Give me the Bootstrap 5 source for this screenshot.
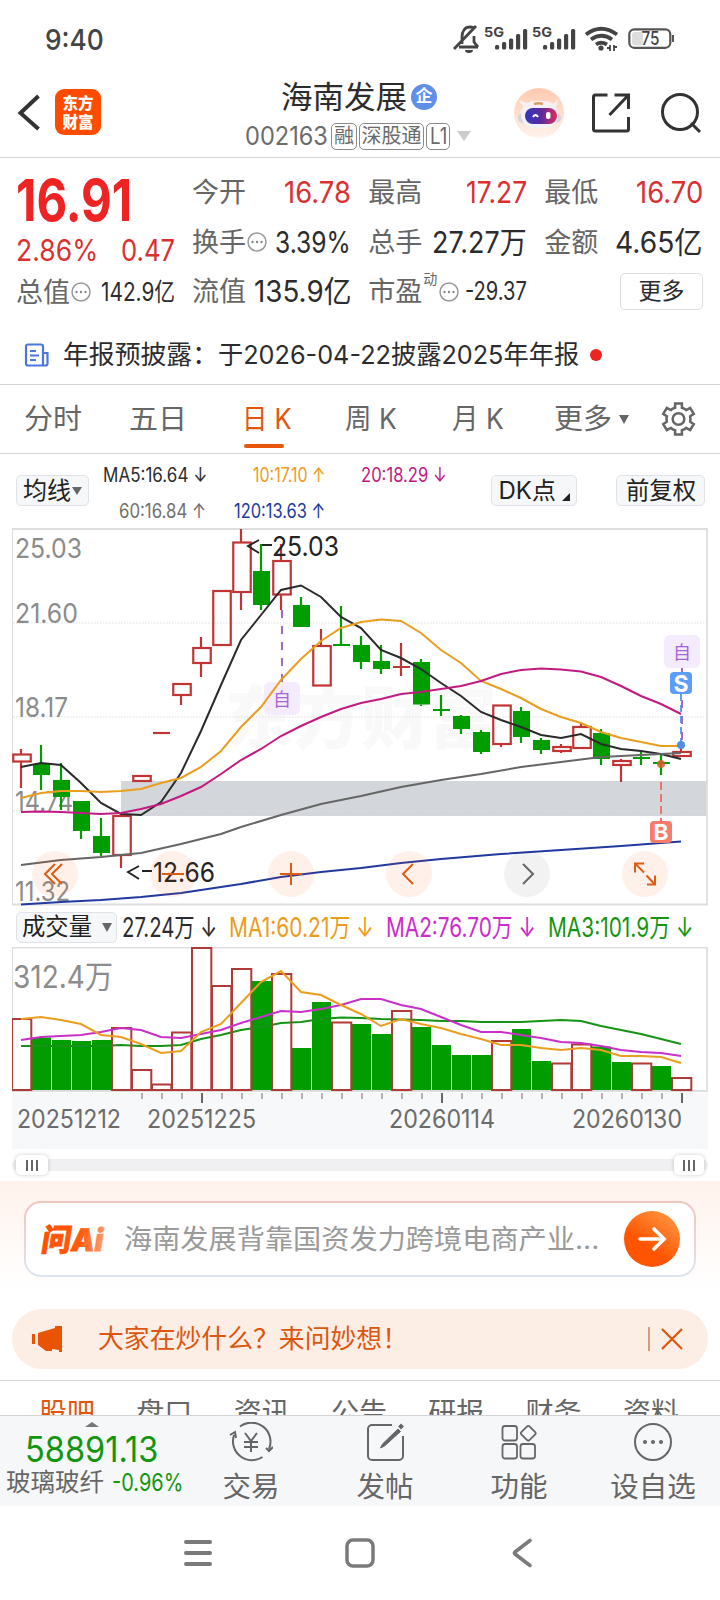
<!DOCTYPE html>
<html lang="zh-CN">
<head>
<meta charset="utf-8">
<meta name="viewport" content="width=device-width, initial-scale=1">
<title>海南发展 002163</title>
<link rel="stylesheet" href="https://cdn.jsdelivr.net/npm/bootstrap@5.3.0/dist/css/bootstrap.min.css">
<style>
  body{width:720px;height:1600px;overflow:hidden;background:#fff;color:#2c2c2e;font-family:Inter,"Noto Sans CJK SC",sans-serif;line-height:1}
  svg{display:block;flex:none}
  svg text{font-family:Inter,"Noto Sans CJK SC",sans-serif}
  .fit{display:inline-block;white-space:nowrap;flex:none}
  .fit>span{display:inline-block;transform-origin:0 50%}
  .statusbar{height:78px;padding:0 46px 0 45px;color:#444}
  .s29{font-size:29px}
  .topbar{height:80px;border-bottom:1px solid #d4d4d4}
  .applogo{width:46px;height:46px;border-radius:9px;background:#ff4b00;color:#fff;font:900 15.5px/19px "Noto Sans CJK SC",sans-serif;padding-top:4px;margin-left:15px}
  .tagbox{border:1.5px solid #8a8a8a;border-radius:5px;height:27px;color:#6b6b6b;font-size:20px}
  .ent{width:26px;height:26px;border-radius:50%;background:#5f8fe8;color:#fff;font-size:17px;font-weight:700}
  .code{color:#6b6b6b;font-size:25px}
  .quote{height:159px;padding:10px 17px 0 16px}
  .bigprice{font-size:58px;font-weight:700;color:#ee2324}
  .up{color:#d9312f}
  .lab{font-size:27px;color:#666}
  .ell{margin-left:1px}
  .val{font-size:29.5px}
  .qrow{height:49.5px}
  .sval{font-size:25px}
  .morebtn{width:83px;height:37px;border:1.5px solid #dcdee0;border-radius:5px;font-size:23px}
  .notice{height:68px;padding:9px 0 0 24px;border-bottom:1px solid #d4d4d4;font-size:26px}
  .tabsbar{height:69px;border-bottom:1px solid #d4d4d4;color:#666;font-size:28.5px;padding-left:24px}
  .tabon{color:#e2570c;position:relative}
  .tabon::after{content:"";position:absolute;left:2px;top:39px;width:40px;height:4px;border-radius:2px;background:#e8560a}
  .indic{height:74px;padding:0 15px 0 16px}
  .pill{background:#f6f7f9;border:1.5px solid #dfe2e6;border-radius:5px;height:31px;font-size:24px;color:#222}
  .malist{width:344px;font-size:19.5px;line-height:36px;margin:3px 0 0 14px}
  .volhead{height:41px;padding:1px 16px 0;font-size:26.5px}
  .rail{height:12px;border-radius:6px;background:#f0f0f3;margin:10px 12px 10px;position:relative}
  .grip{position:absolute;top:-4px;height:20px;border-radius:5px;background:#fff;box-shadow:0 0 4px rgba(0,0,0,.2)}
  .grip i{width:1.5px;height:11px;background:#666}
  .aizone{height:128px;padding:20px 24px 0;background:linear-gradient(#fff2ec,#fff 108px)}
  .askbox{height:76px;border-radius:17px;border:2px solid transparent;background:linear-gradient(#fff,#fff) padding-box,linear-gradient(#f0c6be,#dfe5f2) border-box;padding:0 14px 0 11px}
  .sendbtn{width:56px;height:56px;border-radius:50%;background:linear-gradient(215deg,#ff9440 10%,#ff5500 62%)}
  .hint{color:#9a9a9a;font-size:27px}
  .promo{height:60px;border-radius:30px;background:#fceee5;margin:0 12px;color:#dd560e;font-size:26px;padding:0 24px 0 20px}
  .subtabs{height:35px;margin-top:11px;border-top:1px solid #d4d4d4;overflow:hidden;padding:18px 0 0 39px;gap:41.3px;color:#666;font-size:28px}
  .dock{height:91px;background:#f6f7f9;border-top:1px solid #d4d4d6;color:#666}
  .dock .idx{width:184px}
  .dock .cell{width:134px;font-size:28.5px;padding-top:6px}
  .dock .cell span{margin-top:11px}
  .green{color:#12960f}
</style>
</head>
<body>

<div class="statusbar d-flex align-items-center justify-content-between">
  <span class="fit s29 fw-medium" data-w="59">9:40</span>
  <svg width="222" height="30" viewBox="452 24 222 30" fill="#444">
    <g fill="none" stroke="#444" stroke-width="2.8"><path d="M459 47h19M462 44v-7c0-6 3-10 8-10 2 0 4 .6 5 2M474 36v6l4 5M454 49l22-23"/></g><path d="M465 50h8a4 3 0 0 1-8 0z"/>
    <text x="484" y="37" font-size="13.5" font-weight="700" textLength="20" lengthAdjust="spacingAndGlyphs">5G</text>
    <g id="sig"><rect x="495" y="45" width="4.2" height="4.5" rx="1.5"/><rect x="502" y="42" width="4.2" height="7.5" rx="1.5"/><rect x="509" y="38.500" width="4.200" height="11" rx="1.5"/><rect x="516" y="34" width="4.2" height="15.5" rx="1.5"/><rect x="523" y="29" width="4.2" height="20.500" rx="1.500"/></g>
    <text x="532" y="37" font-size="13.5" font-weight="700" textLength="20" lengthAdjust="spacingAndGlyphs">5G</text>
    <use href="#sig" x="48"/>
    <g fill="none" stroke="#444" stroke-width="3.8"><path d="M586 34.500q15-11.500 31 0M591 39.500q10.500-7.500 21 0M596 44.500q5-3.500 11 0"/></g><circle cx="601" cy="48" r="2.600"/><path d="M610 45v6M614 45v6M607 48h3M614 47h3" stroke="#444" stroke-width="1.800"/>
    <rect x="632" y="32" width="11" height="13.500" rx="3" fill="#ddd"/><rect x="629.300" y="29.300" width="41" height="18.500" rx="5" fill="none" stroke="#555" stroke-width="2.200"/><rect x="672.500" y="35.500" width="1" height="6" stroke="#555"/>
    <text x="641.500" y="45" font-size="18" font-weight="500" textLength="18" lengthAdjust="spacingAndGlyphs">75</text>
  </svg>
</div>

<div class="topbar d-flex">
  <div class="d-flex align-items-center ps-3" style="padding-bottom:12px">
    <svg width="24" height="38" viewBox="0 0 24 38" fill="none" stroke="#333" stroke-width="4"><path d="M22.500 3 4.500 20l18 16"/></svg>
    <div class="applogo text-center">东方<br>财富</div>
  </div>
  <div class="d-flex flex-column align-items-start" style="margin-left:144px">
    <div class="d-flex align-items-center ps-1" style="height:37px;margin-left:32px">
      <span class="fit" data-w="126" style="font-size:31px">海南发展</span><span class="ent d-flex align-items-center justify-content-center ms-1">企</span>
    </div>
    <div class="d-flex align-items-center" style="height:42px">
      <span class="fit code" data-w="83">002163</span>
      <span class="tagbox d-flex align-items-center justify-content-center" style="width:26px;margin-left:3px">融</span>
      <span class="tagbox d-flex align-items-center justify-content-center" style="width:65px;margin-left:2px">深股通</span>
      <span class="tagbox d-flex align-items-center justify-content-center" style="width:24px;margin-left:2px"><span class="fit" data-w="17" style="font-size:23px">L1</span></span>
      <svg style="margin-left:7px" width="14" height="10" viewBox="0 0 14 10"><path d="M0 0h14L7 10z" fill="#ccc"/></svg>
    </div>
  </div>
  <div class="d-flex align-items-center ms-auto" style="padding:0 18px 9px 0">
    <svg width="50" height="50" viewBox="0 0 50 50">
      <defs><linearGradient id="bot" x1="0" y1="0" x2="0" y2="1"><stop offset="0" stop-color="#ffc9ae"/><stop offset="1" stop-color="#fff3ee"/></linearGradient><linearGradient id="visor"><stop offset="0" stop-color="#3337b8"/><stop offset=".5" stop-color="#5a2a9c"/><stop offset="1" stop-color="#e0305e"/></linearGradient></defs>
      <circle cx="25" cy="25" r="25" fill="url(#bot)"/><path d="M5 11q2 8 8 8l4-4q-8 0-12-4zM43 10q-1 6-7 6l4 4q5-3 3-10z" fill="#f5f0f2"/>
      <circle cx="9" cy="30" r="5" fill="#d5d3dc"/><circle cx="42" cy="30" r="5" fill="#d5d3dc"/>
      <rect x="7" y="13" width="37" height="27" rx="13" fill="#f3f1f5"/><path d="M20 16q5-1.500 9 0" stroke="#d99b66" stroke-width="2.600" fill="none"/>
      <rect x="11" y="20" width="32" height="16" rx="8" fill="url(#visor)"/><path d="M19 29q2.500-4 5 0" stroke="#fff" stroke-width="2" fill="none"/><rect x="32" y="24" width="4.500" height="7" rx="2" fill="#fff"/>
    </svg>
    <svg style="margin-left:27px" width="40" height="40" viewBox="0 0 39 40" fill="none" stroke="#333" stroke-width="3"><path d="M16 2H4a2 2 0 0 0-2 2v32a2 2 0 0 0 2 2h31a2 2 0 0 0 2-2V24M23 2h14v14M36.500 2.500 18 22"/></svg>
    <svg style="margin-left:29px" width="42" height="42" viewBox="0 0 42 42" fill="none" stroke="#333" stroke-width="3"><circle cx="20" cy="20" r="17.500"/><path d="m31 31 9 9"/></svg>
  </div>
</div>

<div class="quote d-flex" style="gap:17.400px">
  <div style="width:159px">
    <div class="d-flex align-items-center" style="height:64px"><span class="fit bigprice" data-w="116">16.91</span></div>
    <div class="d-flex justify-content-between align-items-center up val" style="height:37px"><span class="fit" data-w="82">2.86%</span><span class="fit" data-w="54">0.47</span></div>
    <div class="d-flex align-items-center" style="height:46px"><span class="lab">总值</span><svg width="20" height="20" viewBox="0 0 20 20" class="ell"><use href="#dots"/></svg><span class="fit sval ms-auto" data-w="74">142.9亿</span></div>
  </div>
  <div style="width:159px">
    <div class="d-flex align-items-center justify-content-between qrow"><span class="lab">今开</span><span class="fit val up" data-w="67">16.78</span></div>
    <div class="d-flex align-items-center qrow"><span class="lab">换手</span><svg width="20" height="20" viewBox="0 0 20 20" class="ell"><use href="#dots"/></svg><span class="fit val ms-auto" data-w="76">3.39%</span></div>
    <div class="d-flex align-items-center justify-content-between qrow"><span class="lab">流值</span><span class="fit val" data-w="97">135.9亿</span></div>
  </div>
  <div style="width:159px">
    <div class="d-flex align-items-center justify-content-between qrow"><span class="lab">最高</span><span class="fit val up" data-w="61">17.27</span></div>
    <div class="d-flex align-items-center justify-content-between qrow"><span class="lab">总手</span><span class="fit val" data-w="95">27.27万</span></div>
    <div class="d-flex align-items-center qrow"><span class="lab">市盈</span><span class="lab align-self-start" style="font-size:14px;margin:5px 1px 0">动</span><svg width="20" height="20" viewBox="0 0 20 20" class="ell"><use href="#dots"/></svg><span class="fit sval ms-auto" data-w="62">-29.37</span></div>
  </div>
  <div style="width:159px">
    <div class="d-flex align-items-center justify-content-between qrow"><span class="lab">最低</span><span class="fit val up" data-w="67">16.70</span></div>
    <div class="d-flex align-items-center justify-content-between qrow"><span class="lab">金额</span><span class="fit val" data-w="88">4.65亿</span></div>
    <div class="d-flex align-items-center justify-content-end qrow"><span class="morebtn d-flex align-items-center justify-content-center">更多</span></div>
  </div>
</div>
<svg width="0" height="0" class="position-absolute"><defs><g id="dots"><circle cx="10" cy="10" r="9" fill="none" stroke="#9a9a9a" stroke-width="1.500"/><circle cx="5.500" cy="10" r="1.200" fill="#888"/><circle cx="10" cy="10" r="1.200" fill="#888"/><circle cx="14.500" cy="10" r="1.200" fill="#888"/></g></defs></svg>

<div class="notice d-flex align-items-center">
  <svg width="25" height="24" viewBox="0 0 25 24" fill="none" stroke="#4b76dc" stroke-width="2.200"><path d="M19 22.500V3.500a2 2 0 0 0-2-2H4a2 2 0 0 0-2 2v17a2 2 0 0 0 2 2h17.500a2 2 0 0 0 2-2V10H19M6 8h6M6 12.500h9M6 17h6"/></svg>
  <span class="fit" data-w="155" style="margin-left:14px">年报预披露：</span><span class="fit" data-w="361">于2026-04-22披露2025年年报</span>
  <svg style="margin-left:11px" width="12" height="12"><circle cx="6" cy="6" r="6" fill="#ee2324"/></svg>
</div>

<div class="tabsbar d-flex align-items-center">
  <span class="fit" data-w="58">分时</span>
  <span class="fit" data-w="58" style="margin-left:47px">五日</span>
  <span class="tabon" style="margin-left:55px"><span class="fit" data-w="50">日 K</span></span>
  <span class="fit" data-w="52" style="margin-left:53px">周 K</span>
  <span class="fit" data-w="52" style="margin-left:55px">月 K</span>
  <span class="fit" data-w="58" style="margin-left:50px">更多</span>
  <svg style="margin-left:7px" width="10" height="9"><path d="M0 0h10L5 9z" fill="#666"/></svg>
  <svg style="margin-left:32px" width="35" height="36" viewBox="0 0 36 36" fill="none" stroke="#666" stroke-width="2.600"><path d="M14.500 2h7v4.500q2.500.8 4.300 2.300L30 6.700l3.700 6-3.700 2.500q.6 2.800 0 5.600l3.700 2.500-3.700 6-4.200-2.100q-1.800 1.500-4.300 2.300V34h-7v-4.500q-2.500-.8-4.300-2.300L6 29.300l-3.700-6L6 20.800q-.6-2.800 0-5.600l-3.700-2.500 3.700-6 4.200 2.100q1.800-1.500 4.300-2.300z"/><circle cx="18" cy="18" r="6"/></svg>
</div>

<div class="indic d-flex align-items-start">
  <span class="pill d-flex align-items-center justify-content-center" style="width:73px;margin-top:21px">均线<svg style="margin-left:1px" width="10" height="8"><path d="M0 0h10L5 8z" fill="#666"/></svg></span>
  <div class="malist d-flex flex-wrap">
    <div class="text-end" style="width:103px"><span class="fit" data-w="104">MA5:16.64 ↓</span></div>
    <div class="text-end" style="width:119px;color:#eb9c1b"><span class="fit" data-w="72">10:17.10 ↑</span></div>
    <div class="text-end" style="width:122px;color:#c0177c"><span class="fit" data-w="86">20:18.29 ↓</span></div>
    <div class="text-end" style="width:103px;color:#707070"><span class="fit" data-w="87">60:16.84 ↑</span></div>
    <div class="text-end" style="width:119px;color:#20399f"><span class="fit" data-w="91">120:13.63 ↑</span></div>
  </div>
  <span class="pill d-flex align-items-center justify-content-center" style="width:86px;margin:21px 0 0 44px"><span class="fit" data-w="57">DK点</span><svg class="align-self-end mb-1" style="margin-left:6px" width="8" height="8"><path d="M8 0v8H0z" fill="#222"/></svg></span>
  <span class="pill d-flex align-items-center justify-content-center ms-auto" style="width:89px;margin-top:21px"><span class="fit" data-w="70">前复权</span></span>
</div>

<svg id="kline" class="mx-auto" width="696" height="378" viewBox="12 528 696 378"></svg>

<div class="volhead d-flex align-items-center">
  <span class="pill d-flex align-items-center justify-content-center" style="width:101px"><span class="fit" data-w="70">成交量</span><svg style="margin-left:10px" width="10" height="9"><path d="M0 0h10L5 9z" fill="#666"/></svg></span>
  <span class="fit" data-w="95" style="margin-left:5px">27.24万 ↓</span>
  <span class="fit" data-w="145" style="margin-left:12px;color:#eb9c1b">MA1:60.21万 ↓</span>
  <span class="fit" data-w="150" style="margin-left:12px;color:#cc2ccc">MA2:76.70万 ↓</span>
  <span class="fit green" data-w="145" style="margin-left:12px">MA3:101.9万 ↓</span>
</div>

<svg id="vol" class="mx-auto" width="696" height="202" viewBox="12 947 696 202"></svg>

<div class="rail">
  <div class="grip d-flex align-items-center justify-content-center" style="left:4px;width:32px;gap:3.500px"><i></i><i></i><i></i></div>
  <div class="grip d-flex align-items-center justify-content-center" style="right:4px;width:30px;gap:3.500px"><i></i><i></i><i></i></div>
</div>

<div class="aizone">
  <div class="askbox d-flex align-items-center">
    <svg width="70" height="38" viewBox="36 1220 70 38"><defs><linearGradient id="ai"><stop offset="0" stop-color="#ff5000"/><stop offset=".6" stop-color="#ff5a0a"/><stop offset="1" stop-color="#ff9a6c"/></linearGradient></defs>
      <g transform="translate(0 1252) skewX(-9)"><text x="39" y="-1" font-size="31" font-weight="900" fill="url(#ai)" stroke="url(#ai)" stroke-width=".8" textLength="62" lengthAdjust="spacingAndGlyphs">问Ai</text></g></svg>
    <span class="fit hint" data-w="475" style="margin-left:17px">海南发展背靠国资发力跨境电商产业...</span>
    <span class="sendbtn d-flex align-items-center justify-content-center ms-auto"><svg width="30" height="26" viewBox="0 0 30 26" fill="none" stroke="#fff" stroke-width="3.600" stroke-linecap="round"><path d="M3 13h23M17 3l10 10-10 10"/></svg></span>
  </div>
</div>

<div class="promo d-flex align-items-center">
  <svg width="30" height="28" viewBox="0 0 30 28" fill="#e85404"><path d="M0 9h3v10H0zM6 8l17-5V1h7v26h-3v-2l-7-1v2h-6l-4-3-4-3z"/></svg>
  <span class="fit" data-w="310" style="margin-left:36px">大家在炒什么？来问妙想！</span>
  <svg class="ms-auto" width="36" height="26" viewBox="0 0 36 26" fill="none" stroke="#dd560e"><path d="M1 1v24" stroke-width="1.200" stroke="#b8652f"/><path d="m14 3 20 20M34 3 14 23" stroke-width="2.200"/></svg>
</div>

<div class="subtabs d-flex align-items-start">
  <span style="color:#e2570c">股吧</span><span>盘口</span><span>资讯</span><span>公告</span><span>研报</span><span>财务</span><span>资料</span>
</div>

<div class="dock d-flex">
  <div class="idx position-relative">
    <svg class="position-absolute" style="left:85px;top:6px" width="14" height="5"><path d="M0 5h14L7 0z" fill="#777"/></svg>
    <div class="green" style="font-size:35px;padding:16px 0 0 25px"><span class="fit" data-w="133">58891.13</span></div>
    <div class="d-flex align-items-center" style="font-size:24.500px;height:30px;padding:0 1px 0 6px"><span>玻璃玻纤</span><span class="fit green ms-auto" data-w="71">-0.96%</span></div>
  </div>
  <div class="cell d-flex flex-column align-items-center">
    <svg width="44" height="40" viewBox="0 0 44 40" fill="none" stroke="#666" stroke-width="2"><path d="M11 4.500A19 19 0 0 1 40 27M37 26l3 3 4-4M33.500 35A19 19 0 0 1 5 13M1 13l5-3 1 6"/><path d="m16 11 6 8 6-8M22 19v11M15 20h14M15 25h14"/></svg>
    <span>交易</span>
  </div>
  <div class="cell d-flex flex-column align-items-center">
    <svg width="40" height="40" viewBox="0 0 40 40" fill="none" stroke="#666" stroke-width="2"><path d="M27 3H7a4 4 0 0 0-4 4v27a4 4 0 0 0 4 4h27a4 4 0 0 0 4-4V14"/><path d="m15.500 26 2-4L33 7l2.500 2.500L19.500 24z" fill="#666" stroke-width="1"/><path d="m34.500 6 3-3" stroke-width="4"/></svg>
    <span>发帖</span>
  </div>
  <div class="cell d-flex flex-column align-items-center">
    <svg width="36" height="40" viewBox="0 0 36 40" fill="none" stroke="#666" stroke-width="1.800"><rect x="1.500" y="4" width="14.500" height="14.500" rx="2.500"/><rect x="1.500" y="22" width="14.500" height="14.500" rx="2.500"/><rect x="19.500" y="22" width="14.500" height="14.500" rx="2.500"/><rect x="21.500" y="5.500" width="11.500" height="11.500" rx="2" transform="rotate(45 27.250 11.300)"/></svg>
    <span>功能</span>
  </div>
  <div class="cell d-flex flex-column align-items-center">
    <svg width="40" height="40" viewBox="0 0 40 40"><circle cx="20" cy="20" r="18" fill="none" stroke="#666" stroke-width="2"/><g fill="#666"><circle cx="12" cy="20" r="2"/><circle cx="20" cy="20" r="2"/><circle cx="28" cy="20" r="2"/></g></svg>
    <span>设自选</span>
  </div>
</div>

<div class="d-flex align-items-center" style="height:93px;gap:134px;padding-left:184px">
  <svg width="28" height="30" viewBox="0 0 28 30" stroke="#7a7a7a" stroke-width="4" stroke-linecap="round"><path d="M2 4h24M2 15h24M2 26h24"/></svg>
  <svg style="margin-left:-1px" width="30" height="30" viewBox="0 0 30 30" fill="none" stroke="#7a7a7a" stroke-width="3.500"><rect x="2" y="2" width="26" height="26" rx="6"/></svg>
  <svg style="margin-left:2px" width="22" height="30" viewBox="0 0 22 30" fill="none" stroke="#7a7a7a" stroke-width="3.600" stroke-linecap="round" stroke-linejoin="round"><path d="M19 2.500 4 14q-1 1 0 2l15 11.500"/></svg>
</div>

<script src="https://cdn.jsdelivr.net/npm/bootstrap@5.3.0/dist/js/bootstrap.bundle.min.js"></script>
<script>
  document.querySelectorAll('.fit').forEach(function (el) {
    var inner = document.createElement('span');
    inner.textContent = el.textContent;
    el.textContent = '';
    el.appendChild(inner);
    var w = +el.dataset.w;
    inner.style.transform = 'scaleX(' + w / inner.offsetWidth + ')';
    el.style.width = w + 'px';
  });

  var X = function (i) { return 21 + 20 * i; };
  var line = function (ys, color, w) {
    return '<polyline fill="none" stroke="' + color + '" stroke-width="' + (w || 2) + '" points="' +
      ys.map(function (y, i) { return X(i) + ',' + y; }).join(' ') + '"/>';
  };
  var pts = function (p, color) { return '<polyline fill="none" stroke="' + color + '" stroke-width="2" points="' + p + '"/>'; };
  var label = function (x, y, w, s, size, color, extra) {
    return '<text x="' + x + '" y="' + y + '" font-size="' + size + '" fill="' + color + '" textLength="' + w +
      '" lengthAdjust="spacingAndGlyphs" ' + (extra || '') + '>' + s + '</text>';
  };
  var R = '#c03534', G = '#009c00';

  // [up?, bodyTop, bodyBottom, wickTop, wickBottom]
  var k = [[1,754.5,761.5,749,788],[0,764,775,745,790],[0,780,797,763,810],[0,801,831,801,839],[0,836,853,818,856],[1,816,855,816,868],
    [1,776,781,776,781],[1,733,733,733,733],[1,684,695,684,705],[1,648,663,637,677],[1,591,645,591,645],[1,542.5,592,529,610],
    [0,571,605,544,610],[1,561,594.5,544,610],[0,605,627,597,627],[1,646,685.5,629,685],[0,645,645,606,646],[0,645,662,636,669],
    [0,661,669,645,674],[1,667,667,643,676],[0,662,704.5,659,706],[0,710,710,695,716],[0,716,729,715,734],[0,732,752,730,754],
    [1,705.500,744,705,747],[0,711,737,707,743],[0,740,750,738,754],[1,747,751,744,753],[1,727,748,723,749],[0,733,759,729,765],
    [1,761,765,759,782],[0,758,758,752,765],[0,763,763,753,775],[1,752,756,747,757]];
  var s = '<g font-weight="900" opacity=".02">' + label(225, 743, 272, '东方财富', 68, '#000') + '</g>';
  s += '<rect x="121" y="781" width="586" height="35" fill="#d3d6db"/>';
  [623, 717, 811].forEach(function (y) { s += '<path d="M13 ' + y + 'H707" stroke="#ddd" stroke-width="1.2" stroke-dasharray="1.5 1.5"/>'; });
  s += '<path d="M12.500 905V529" stroke="#ddd"/><path d="M12 529H707V904.500H12" fill="none" stroke="#dedede" stroke-width="1.800"/>';
  s += label(15,558,67,'25.03',27.5,'#8c8c8c') + label(15,623,63,'21.60',27.5,'#8c8c8c') + label(15,717,53,'18.17',27.5,'#8c8c8c') +
       label(15,811,58,'14.74',27.5,'#8c8c8c') + label(15,901,55,'11.32',27.5,'#8c8c8c');
  k.forEach(function (c, i) {
    var x = X(i), col = c[0] ? R : G;
    if (c[1] === c[2]) {
      s += '<path d="M' + (x - 8) + ' ' + c[1] + 'h17M' + x + ' ' + c[3] + 'V' + c[4] + '" stroke="' + col + '" stroke-width="2.200"/>';
    } else {
      s += '<path d="M' + x + ' ' + c[3] + 'V' + c[1] + 'M' + x + ' ' + c[2] + 'V' + c[4] + '" stroke="' + col + '" stroke-width="2.200"/>';
      s += c[0] ? '<rect x="' + (x - 7.75) + '" y="' + c[1] + '" width="17.500" height="' + (c[2] - c[1]) + '" fill="none" stroke="' + col + '" stroke-width="2.200"/>'
                : '<rect x="' + (x - 8) + '" y="' + c[1] + '" width="17" height="' + (c[2] - c[1]) + '" fill="' + col + '"/>';
    }
  });
  s += '<path d="M282 610V682M682 668V745" stroke="#9d6cc0" stroke-width="2" stroke-dasharray="8 8"/>' +
       '<path d="M681 694V745" stroke="#4e93ef" stroke-width="1.800" stroke-dasharray="7 4"/>' +
       '<path d="M661 782V822" stroke="#ee7466" stroke-width="2" stroke-dasharray="8 4"/>';
  s += '<g fill="#f4ebfd"><rect x="264" y="682" width="36" height="33" rx="6"/><rect x="664" y="635" width="36" height="33" rx="6"/></g>';
  s += label(273,706,18,'自',18,'#a266d6') + label(673,659,18,'自',18,'#a266d6');
  s += line([767,763,765,783,803,814,815,802,773,731,685,640,615,590,585.5,597,617,628,650,658,669,683,696,712,720,727,735,738,734,744,749,751,754,759], '#2a2a2a');
  s += line([798,793,791,791,792,791,789,783,778,767,751,727,707,680,659,641,628,622,619.5,621,633,650,663,681,689,698,709,717,723,732,738,742,746,746], '#e99e1f');
  s += line([812,811.5,812,813,814,813,809,804,796,787,774,760,749,736,726,717,709,703,699,694,692,689,686,681,674,670,668.5,669.5,671.5,677,686,696,704,714], '#c21a80');
  s += pts('21,865 61,860 101,857 141,853 181,844 221,834 241,827 281,815 321,804 361,796 401,787 441,780 481,774 521,767 561,762 601,757 641,755 681,753', '#666');
  s += pts('21,904.5 61,902 101,900 141,897 181,893 221,887 241,884 281,877 321,872 361,868 401,863 441,859 501,854 561,850 621,846 681,841.5', '#2239a0');
  s += '<circle cx="681" cy="745" r="4" fill="#4f8fe6"/><circle cx="661" cy="764" r="4" fill="#dc5a24" opacity=".85"/>';
  s += '<rect x="670" y="672" width="22" height="22" rx="4" fill="#5b9df9"/><rect x="650" y="821" width="22" height="22" rx="4" fill="#f67b6c"/>' +
       label(673.5,691.5,15,'S',23.5,'#fff','font-weight="700"') + label(653.5,840,15,'B',22,'#fff','font-weight="700"');
  s += '<g fill="none" stroke="#222" stroke-width="1.900"><path d="M259 540 248 546l11 7M262 545h10M139 866l-11 6 11 7M142 871h10"/></g>' +
       label(272,556,67,'25.03',26.5,'#222') + label(153,882,62,'12.66',26.5,'#222');
  [55,173,291,409,527,645].forEach(function (x) { s += '<circle cx="' + x + '" cy="874" r="23" fill="' + (x === 527 ? '#000' : '#ff6410') + '" opacity="' + (x === 527 ? .05 : .09) + '"/>'; });
  s += '<g fill="none" stroke="#de5c14" stroke-width="2"><path d="m55 864-10 10 10 10M62 864l-10 10 10 10M162 874h22M280 874h22M291 863v22M413 864l-10 10 10 10"/>' +
       '<path d="M644 863.500h-9v9M635.500 864l8.500 8.500M647 884.500h8v-9M654.500 884l-8-8.500"/></g><path d="m523 864 10 10-10 10" fill="none" stroke="#666" stroke-width="2"/>';
  document.getElementById('kline').innerHTML = s;

  // Volume bars: positive = rising day, negative = falling day (value is the bar's top)
  var v = [1019,-1037.5,-1040,-1041,-1040,1028,1070,1084.5,1032.5,948,986,969,-981,974,-1048,-1002,1022.5,-1024,-1034,1011,-1027,-1045,-1055,-1055,1041,-1029,-1061,1063.5,1044.5,-1046.5,-1062,1063.5,-1066,1078];
  var t = '<rect x="12" y="1093" width="696" height="56" fill="#f7f8fa"/>' +
    '<path d="M12.500 948V1091" stroke="#ddd"/><path d="M12 947.500H707V1091H12" fill="none" stroke="#dedede" stroke-width="1.800"/>' + label(13,988,100,'312.4万',31.5,'#8c8c8c');
  v.forEach(function (y, i) {
    if (y < 0) t += '<rect x="' + (X(i) - 9) + '" y="' + (-y) + '" width="19" height="' + (1090 + y) + '" fill="' + G + '"/>';
  });
  t += line([1046,1046,1046,1046,1046,1045,1046,1046,1045,1039,1035,1030,1027,1023,1022,1019,1017.5,1018,1019,1019.5,1020,1021,1021,1022,1022,1022,1021,1020,1021,1026,1030,1034,1039,1044], '#149314');
  v.forEach(function (y, i) {
    if (y > 0) t += '<rect x="' + (X(i) - 9) + '" y="' + y + '" width="19.300" height="' + (1090 - y) + '" fill="none" stroke="' + '#b03a38' + '" stroke-width="2"/>';
    if (i > 5) t += '<path d="M' + (X(i) + 1) + ' 1093v' + ((i - 9) % 12 === 0 && i < 33 ? 0 : 6) + '" stroke="#aaa" stroke-width="1.800"/>';
  });
  [202, 442, 682].forEach(function (x) { t += '<path d="M' + x + ' 1093v10" stroke="#666" stroke-width="2"/>'; });
  t += line([1040,1037,1036,1035,1032,1028,1030,1037,1038,1034,1030,1023,1017,1011,1012,1009,1005,999,999,1005,1009,1017,1025,1032,1032,1035,1038,1042,1043,1046,1050,1052,1053,1056], '#c92fc9');
  t += line([1019,1017,1020,1024,1035,1037,1044,1053,1051,1032,1024,1003,982,971,992,995,1005,1014,1026,1019,1024,1028,1034,1039,1045,1045,1048,1050,1048,1050,1056,1056,1057,1063], '#e99e1f');
  t += label(17,1128,104,'20251212',25.5,'#6b6b6b') + label(147,1128,109,'20251225',25.5,'#6b6b6b') + label(389,1128,106,'20260114',25.5,'#6b6b6b') + label(572,1128,110,'20260130',25.5,'#6b6b6b');
  document.getElementById('vol').innerHTML = t;
</script>
</body>
</html>
